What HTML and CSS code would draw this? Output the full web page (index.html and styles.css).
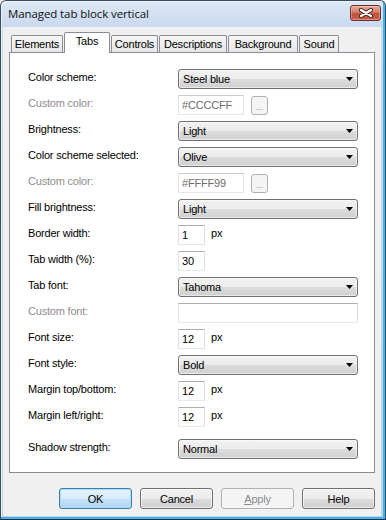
FILE: index.html
```html
<!DOCTYPE html>
<html lang="en">
  <head>
    <meta charset="UTF-8" />
    <title>Managed tab block vertical</title>
    <link rel="stylesheet" href="styles.css">
  </head>
  <body>
    <div class="window">
      <div class="titlebar">
        <span class="title">Managed tab block vertical</span>
        <div class="close-btn">
          <svg width="14" height="10" viewBox="0 0 14 10">
            <path d="M2 2 L12 8 M2 8 L12 2" stroke="#3a2420" stroke-width="4.2" stroke-linecap="round" />
            <path d="M2 2 L12 8 M2 8 L12 2" stroke="#ffffff" stroke-width="2.3" stroke-linecap="round" />
          </svg>
        </div>
      </div>

      <div class="client">
        <div class="tab-strip">
          <div class="tab">Elements</div>
          <div class="tab active">Tabs</div>
          <div class="tab">Controls</div>
          <div class="tab">Descriptions</div>
          <div class="tab">Background</div>
          <div class="tab">Sound</div>
        </div>

        <div class="panel">
          <div class="row">
            <label class="row-label">Color scheme:</label>
            <div class="combo"><span>Steel blue</span><svg class="arrow" width="7" height="4"><polygon points="0,0 7,0 3.5,4" /></svg></div>
          </div>
          <div class="row">
            <label class="row-label disabled">Custom color:</label>
            <input class="field field-color" type="text" value="#CCCCFF" disabled />
            <div class="dots-btn">...</div>
          </div>
          <div class="row">
            <label class="row-label">Brightness:</label>
            <div class="combo"><span>Light</span><svg class="arrow" width="7" height="4"><polygon points="0,0 7,0 3.5,4" /></svg></div>
          </div>
          <div class="row">
            <label class="row-label">Color scheme selected:</label>
            <div class="combo"><span>Olive</span><svg class="arrow" width="7" height="4"><polygon points="0,0 7,0 3.5,4" /></svg></div>
          </div>
          <div class="row">
            <label class="row-label disabled">Custom color:</label>
            <input class="field field-color" type="text" value="#FFFF99" disabled />
            <div class="dots-btn">...</div>
          </div>
          <div class="row">
            <label class="row-label">Fill brightness:</label>
            <div class="combo"><span>Light</span><svg class="arrow" width="7" height="4"><polygon points="0,0 7,0 3.5,4" /></svg></div>
          </div>
          <div class="row">
            <label class="row-label">Border width:</label>
            <input class="field field-small" type="text" value="1" />
            <span class="unit">px</span>
          </div>
          <div class="row">
            <label class="row-label">Tab width (%):</label>
            <input class="field field-small" type="text" value="30" />
          </div>
          <div class="row">
            <label class="row-label">Tab font:</label>
            <div class="combo"><span>Tahoma</span><svg class="arrow" width="7" height="4"><polygon points="0,0 7,0 3.5,4" /></svg></div>
          </div>
          <div class="row">
            <label class="row-label disabled">Custom font:</label>
            <input class="field field-wide" type="text" value="" />
          </div>
          <div class="row">
            <label class="row-label">Font size:</label>
            <input class="field field-small" type="text" value="12" />
            <span class="unit">px</span>
          </div>
          <div class="row">
            <label class="row-label">Font style:</label>
            <div class="combo"><span>Bold</span><svg class="arrow" width="7" height="4"><polygon points="0,0 7,0 3.5,4" /></svg></div>
          </div>
          <div class="row">
            <label class="row-label">Margin top/bottom:</label>
            <input class="field field-small" type="text" value="12" />
            <span class="unit">px</span>
          </div>
          <div class="row">
            <label class="row-label">Margin left/right:</label>
            <input class="field field-small" type="text" value="12" />
            <span class="unit">px</span>
          </div>
          <div class="row row-spaced">
            <label class="row-label">Shadow strength:</label>
            <div class="combo"><span>Normal</span><svg class="arrow" width="7" height="4"><polygon points="0,0 7,0 3.5,4" /></svg></div>
          </div>
        </div>

        <div class="buttons">
          <button class="btn btn-default">OK</button>
          <button class="btn">Cancel</button>
          <button class="btn btn-disabled"><u>A</u>pply</button>
          <button class="btn">Help</button>
        </div>
      </div>
    </div>
  </body>
</html>
```

FILE: styles.css
```css
body {
  margin: 0;
  font-family: "Liberation Sans", Arial, sans-serif;
  font-size: 11px;
  letter-spacing: -0.2px;
  color: #000;
}
.window {
  width: 386px;
  height: 520px;
  box-sizing: border-box;
  border: 1px solid #3b4a5e;
  border-bottom-color: #1d2a3f;
  border-radius: 6px 6px 0 0;
  padding: 0 4px 3px 2px;
  background: linear-gradient(#dde8f5, #c9d9ee 26px, #bfd2ea);
  box-shadow: inset -2px -2px 0 #3fb2e6, inset 1px 1px 0 #eef4fb;
  display: flex;
  flex-direction: column;
}
.titlebar {
  height: 26px;
  display: flex;
  justify-content: space-between;
  align-items: flex-start;
}
.title {
  font-family: "Open Sans", sans-serif;
  font-size: 11.5px;
  letter-spacing: -0.1px;
  margin: 5px 0 0 5px;
  color: #101010;
}
.close-btn {
  width: 31px;
  height: 16px;
  margin-top: 4px;
  box-sizing: border-box;
  border: 1px solid #6e2e26;
  border-radius: 3px;
  background: linear-gradient(#e8ab9c, #d37c68 45%, #c2503b 55%, #c9604a);
  box-shadow: inset 0 0 0 1px rgba(255, 255, 255, 0.3);
  display: flex;
  align-items: center;
  justify-content: center;
}
.client {
  flex: 1;
  background: #f0f0f0;
  padding: 5px 6px 0;
  display: flex;
  flex-direction: column;
}
.tab-strip {
  display: flex;
  align-items: flex-end;
  gap: 1px;
  height: 20px;
  padding-left: 2px;
  position: relative;
  z-index: 1;
}
.tab {
  height: 17px;
  box-sizing: border-box;
  border: 1px solid #898c95;
  border-bottom: none;
  border-radius: 2px 2px 0 0;
  background: linear-gradient(#f7f7f7, #e6e6e6);
  text-align: center;
  line-height: 16px;
}
.tab:nth-child(1) { width: 52px; }
.tab:nth-child(2) { width: 46px; }
.tab:nth-child(3) { width: 47px; }
.tab:nth-child(4) { width: 68px; }
.tab:nth-child(5) { width: 70px; }
.tab:nth-child(6) { width: 40px; }
.tab.active {
  height: 21px;
  margin-bottom: -1px;
  background: #fff;
  line-height: 17px;
}
.panel {
  height: 421px;
  box-sizing: border-box;
  border: 1px solid #898c95;
  background: #fff;
  padding: 16px 0 0 18px;
  display: flex;
  flex-direction: column;
  gap: 6px;
}
.row {
  display: flex;
  align-items: flex-start;
  height: 20px;
}
.row-spaced {
  margin-top: 6px;
}
.row-label {
  width: 150px;
  flex-shrink: 0;
  padding-top: 1px;
  line-height: 14px;
}
.row-label.disabled {
  color: #8e8e8e;
}
.combo {
  width: 180px;
  height: 20px;
  box-sizing: border-box;
  border: 1px solid #707070;
  border-radius: 3px;
  background: linear-gradient(#f2f2f2, #ebebeb 50%, #dddddd 50%, #cfcfcf);
  box-shadow: inset 0 0 0 1px rgba(255, 255, 255, 0.55);
  padding: 0 4px 0 4px;
  display: flex;
  align-items: center;
  justify-content: space-between;
}
.arrow {
  fill: #000;
}
.field {
  height: 20px;
  box-sizing: border-box;
  margin: 0;
  border: 1px solid;
  border-color: #abadb3 #dbdfe6 #e3e9ef #e2e3ea;
  border-radius: 0;
  background: #fff;
  padding: 0 3px;
  font: inherit;
  letter-spacing: inherit;
  color: #000;
  outline: none;
}
.field:disabled {
  background: #fff;
  color: #6d6d6d;
  border-color: #c9ccd1 #e0e2e5 #e3e5e8 #e0e2e5;
}
.field-small {
  width: 27px;
}
.field-color {
  width: 66px;
}
.field-wide {
  width: 180px;
}
.dots-btn {
  width: 17px;
  height: 19px;
  margin: 1px 0 0 7px;
  box-sizing: border-box;
  border: 1px solid #adb2b5;
  border-radius: 3px;
  background: #f4f4f4;
  color: #8a8a8a;
  font-size: 9px;
  line-height: 20px;
  text-align: center;
}
.unit {
  margin-left: 6px;
  padding-top: 1px;
  line-height: 14px;
}
.buttons {
  display: flex;
  justify-content: flex-end;
  gap: 8px;
  margin-top: 15px;
}
.btn {
  width: 73px;
  height: 21px;
  box-sizing: border-box;
  margin: 0;
  padding: 0;
  border: 1px solid #707070;
  border-radius: 3px;
  background: linear-gradient(#f2f2f2, #ebebeb 50%, #dddddd 50%, #cfcfcf);
  box-shadow: inset 0 0 0 1px rgba(255, 255, 255, 0.6);
  font: inherit;
  letter-spacing: inherit;
  color: #000;
}
.btn-default {
  border-color: #3c7fb1;
  background: linear-gradient(#e6f3fc, #d8ecfa 50%, #c4e2f7 50%, #b4d7f1);
  box-shadow: inset 0 0 0 1px #a8dcf8;
}
.btn-disabled {
  border-color: #adb2b5;
  background: #f4f4f4;
  box-shadow: none;
  color: #8a8a8a;
}
```
